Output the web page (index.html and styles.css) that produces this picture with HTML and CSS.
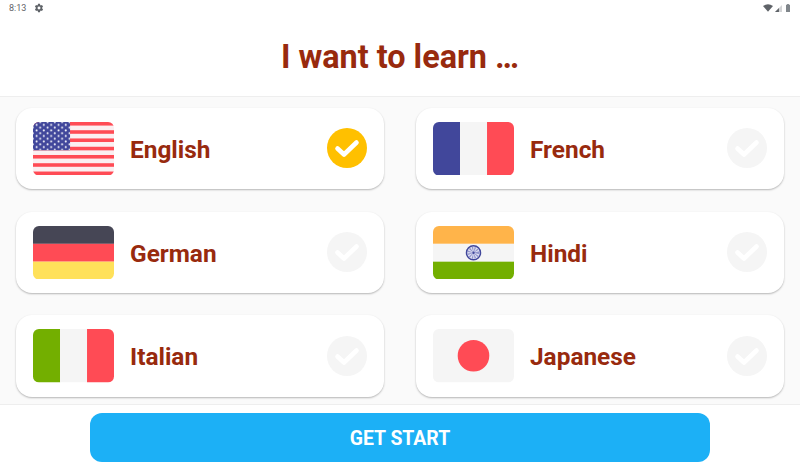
FILE: index.html
```html
<!DOCTYPE html>
<html lang="en">
<head>
<meta charset="utf-8">
<title>I want to learn</title>
<link rel="stylesheet" href="styles.css">
</head>
<body>
<svg class="defs" width="0" height="0" aria-hidden="true">
  <defs>
    <symbol id="check" viewBox="0 0 40 40">
      <circle cx="20" cy="20" r="20" fill="currentColor"/>
      <path d="M10.5 20.5 L17 26.5 L29.5 14.5" fill="none" stroke="#fff" stroke-width="4.6" stroke-linecap="round" stroke-linejoin="round"/>
    </symbol>
    <clipPath id="flagclip"><rect width="82" height="54" rx="6"/></clipPath>
    <pattern id="stars" x="2" y="1.6" width="7.4" height="5.6" patternUnits="userSpaceOnUse">
      <circle cx="1.6" cy="1.3" r="0.95" fill="#fff"/>
      <circle cx="5.3" cy="4.1" r="0.95" fill="#fff"/>
    </pattern>
  </defs>
</svg>
<div class="screen">
  <div class="status">
    <div class="status-left">
      <span class="time">8:13</span>
      <svg class="gear" viewBox="0 0 24 24" width="10" height="10"><path fill="#5f6368" d="M19.4 13c.04-.33.06-.66.06-1s-.02-.67-.07-1l2.11-1.65a.5.5 0 0 0 .12-.64l-2-3.46a.5.5 0 0 0-.61-.22l-2.49 1a7.3 7.3 0 0 0-1.69-.98l-.38-2.65A.49.49 0 0 0 14 2h-4a.49.49 0 0 0-.49.42l-.38 2.65c-.61.25-1.17.59-1.69.98l-2.49-1a.49.49 0 0 0-.61.22l-2 3.46a.49.49 0 0 0 .12.64L4.57 11c-.05.33-.07.67-.07 1s.02.67.07 1l-2.11 1.65a.5.5 0 0 0-.12.64l2 3.46c.12.22.39.3.61.22l2.49-1c.52.4 1.08.73 1.69.98l.38 2.65c.03.24.24.42.49.42h4c.25 0 .46-.18.49-.42l.38-2.65c.61-.25 1.17-.59 1.69-.98l2.49 1c.22.08.49 0 .61-.22l2-3.46a.5.5 0 0 0-.12-.64L19.4 13zM12 15.5a3.5 3.5 0 1 1 0-7 3.5 3.5 0 0 1 0 7z"/></svg>
    </div>
    <div class="status-right">
      <svg class="wifi" viewBox="0 0 12 9" width="10" height="8"><path fill="#5f6368" d="M0 2 Q6 -1.8 12 2 L6 9 Z"/></svg>
      <svg class="signal" viewBox="0 0 8 8" width="7" height="7"><path fill="#d3d4d6" d="M8 0 V8 H0 Z"/><path fill="#5f6368" d="M4.5 3.5 V8 H0 Z"/></svg>
      <svg class="battery" viewBox="0 0 5 10" width="4" height="8"><path fill="#80868b" d="M1.4 0 H3.6 V1 H5 V10 H0 V1 H1.4 Z"/></svg>
    </div>
  </div>
  <header class="title-bar"><h1 class="title">I want to learn …</h1></header>
  <main class="list">
    <div class="card">
      <svg class="flag" viewBox="0 0 82 54" preserveAspectRatio="none"><g clip-path="url(#flagclip)">
        <rect width="82" height="54" fill="#fbeff1"/>
        <g fill="#ff4b55">
          <rect y="0" width="82" height="3.6"/><rect y="8.3" width="82" height="3.6"/><rect y="16.6" width="82" height="3.6"/><rect y="25" width="82" height="3.6"/><rect y="33.3" width="82" height="3.6"/><rect y="41.6" width="82" height="3.6"/><rect y="50" width="82" height="4"/>
        </g>
        <rect width="37.5" height="28.5" fill="#41479b"/>
        <rect width="37.5" height="28.5" fill="url(#stars)"/>
      </g></svg>
      <span class="name">English</span>
      <svg class="tick on"><use href="#check"/></svg>
    </div>
    <div class="card">
      <svg class="flag" viewBox="0 0 82 54" preserveAspectRatio="none"><g clip-path="url(#flagclip)">
        <rect width="27.4" height="54" fill="#41479b"/><rect x="27.4" width="27.3" height="54" fill="#f5f5f5"/><rect x="54.7" width="27.3" height="54" fill="#ff4b55"/>
      </g></svg>
      <span class="name">French</span>
      <svg class="tick"><use href="#check"/></svg>
    </div>
    <div class="card">
      <svg class="flag" viewBox="0 0 82 54" preserveAspectRatio="none"><g clip-path="url(#flagclip)">
        <rect width="82" height="18" fill="#464655"/><rect y="18" width="82" height="18" fill="#ff4b55"/><rect y="36" width="82" height="18" fill="#ffe15a"/>
      </g></svg>
      <span class="name">German</span>
      <svg class="tick"><use href="#check"/></svg>
    </div>
    <div class="card">
      <svg class="flag" viewBox="0 0 82 54" preserveAspectRatio="none"><g clip-path="url(#flagclip)">
        <rect width="82" height="18" fill="#ffb44a"/><rect y="18" width="82" height="18" fill="#f5f5f5"/><rect y="36" width="82" height="18" fill="#73af00"/>
        <circle cx="41" cy="27" r="7.1" fill="#dfe0f1" stroke="#41479b" stroke-width="1.5"/>
        <circle cx="41" cy="27" r="3" fill="none" stroke="#9094cc" stroke-width="6" stroke-dasharray="0.8 0.8"/>
        <circle cx="41" cy="27" r="1.2" fill="#41479b"/>
      </g></svg>
      <span class="name">Hindi</span>
      <svg class="tick"><use href="#check"/></svg>
    </div>
    <div class="card">
      <svg class="flag" viewBox="0 0 82 54" preserveAspectRatio="none"><g clip-path="url(#flagclip)">
        <rect width="27.4" height="54" fill="#73af00"/><rect x="27.4" width="27.3" height="54" fill="#f5f5f5"/><rect x="54.7" width="27.3" height="54" fill="#ff4b55"/>
      </g></svg>
      <span class="name">Italian</span>
      <svg class="tick"><use href="#check"/></svg>
    </div>
    <div class="card">
      <svg class="flag" viewBox="0 0 82 54" preserveAspectRatio="none"><g clip-path="url(#flagclip)">
        <rect width="82" height="54" fill="#f5f5f5"/><circle cx="41" cy="27" r="16" fill="#ff4b55"/>
      </g></svg>
      <span class="name">Japanese</span>
      <svg class="tick"><use href="#check"/></svg>
    </div>
  </main>
  <footer class="footer"><button class="start">GET START</button></footer>
</div>
</body>
</html>
```
FILE: styles.css
```css
* { box-sizing: border-box; }
html, body { margin: 0; padding: 0; }
body { width: 800px; height: 470px; overflow: hidden; background: #fff; font-family: Roboto, sans-serif; }
.defs { display: block; height: 0; }
.screen { display: flex; flex-direction: column; height: 470px; }
.status { height: 16px; padding: 0 10px 0 9px; display: flex; justify-content: space-between; align-items: center; }
.status-left { display: flex; align-items: center; gap: 8px; }
.time { font-size: 9px; color: #5f6368; }
.status-right { display: flex; align-items: center; }
.signal { margin-left: 2px; }
.battery { margin-left: 4px; }
.title-bar { height: 81px; padding-top: 2px; display: flex; align-items: center; justify-content: center; border-bottom: 1px solid #eeeeee; }
.title { margin: 0; font-size: 32.4px; font-weight: 700; color: #982a0e; }
.list { height: 307px; background: #fafafa; padding: 11px 16px 0; display: grid; grid-template-columns: 368px 368px; grid-auto-rows: 81.3px; column-gap: 32px; row-gap: 22.4px; overflow: hidden; }
.card { background: #fff; border-radius: 16px; box-shadow: 0 1px 2px rgba(0,0,0,.28); padding: 0 17px 0 17px; display: flex; align-items: center; }
.flag { width: 81px; height: 53.5px; flex: none; }
.name { margin: 1.4px 0 0 16px; flex: 1; font-size: 24.4px; font-weight: 700; color: #982a0e; }
.tick { width: 40px; height: 40px; flex: none; color: #f5f5f5; margin-bottom: 1px; }
.tick.on { color: #ffc000; }
.footer { height: 66px; border-top: 1px solid #eeeeee; background: #fff; padding: 8px 90px 0; }
.start { display: block; width: 100%; height: 49px; border: 0; border-radius: 12px; padding: 2px 0 0; background: #1cb0f6; color: #fff; font-family: Roboto, sans-serif; font-size: 19.4px; font-weight: 700; }
```
